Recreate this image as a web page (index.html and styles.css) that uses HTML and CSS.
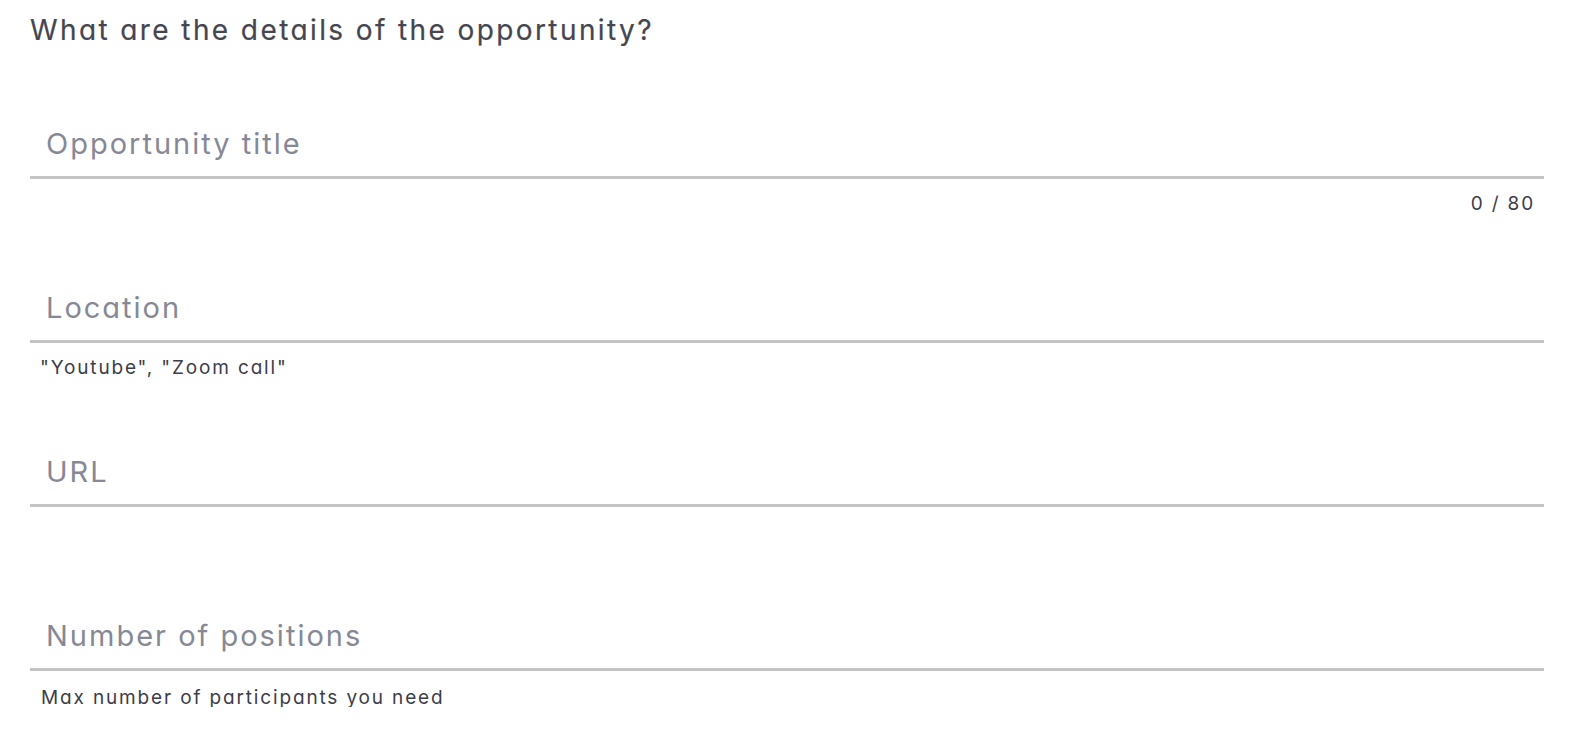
FILE: index.html
```html
<!DOCTYPE html>
<html lang="en">
<head>
<meta charset="utf-8">
<title>Opportunity details</title>
<link rel="stylesheet" href="styles.css">
</head>
<body>
<main class="form">
  <h1 class="form-title">What are the details of the opportunity?</h1>

  <div class="field">
    <div class="field-input"><span class="placeholder">Opportunity title</span></div>
    <div class="field-help field-help--right">0 / 80</div>
  </div>

  <div class="field">
    <div class="field-input"><span class="placeholder">Location</span></div>
    <div class="field-help">"Youtube", "Zoom call"</div>
  </div>

  <div class="field">
    <div class="field-input"><span class="placeholder">URL</span></div>
    <div class="field-help"></div>
  </div>

  <div class="field">
    <div class="field-input"><span class="placeholder">Number of positions</span></div>
    <div class="field-help field-help--max">Max number of participants you need</div>
  </div>
</main>
</body>
</html>
```

FILE: styles.css
```css
* { box-sizing: border-box; }

html, body {
  margin: 0;
  padding: 0;
  background: #ffffff;
}

body {
  font-family: "Inter", "Noto Sans", "Liberation Sans", sans-serif;
  font-feature-settings: "cv11" 1, "ss02" 0;
}

.form {
  width: 1514px;
  margin-left: 30px;
  padding-top: 13px;
}

.form-title {
  margin: 0;
  font-size: 28px;
  line-height: 34px;
  font-weight: 400;
  letter-spacing: 2.4px;
  color: #45464f;
  -webkit-text-stroke: 0.2px #45464f;
}

.field {
  margin-top: 76px;
}

.form-title + .field {
  margin-top: 80px;
}

.field-input {
  padding: 0 16px 15px;
  border-bottom: 3px solid #c4c4c4;
}

.placeholder {
  display: block;
  font-size: 29px;
  line-height: 34px;
  letter-spacing: 2px;
  color: #868896;
}

.field-help {
  height: 36px;
  padding: 14px 10px 0;
  font-size: 19px;
  line-height: 22px;
  letter-spacing: 1.85px;
  color: #3c3d47;
}

.field-help--right {
  text-align: right;
  padding-right: 9px;
}

.field-help--max {
  padding-left: 11px;
  padding-top: 16px;
}
```
